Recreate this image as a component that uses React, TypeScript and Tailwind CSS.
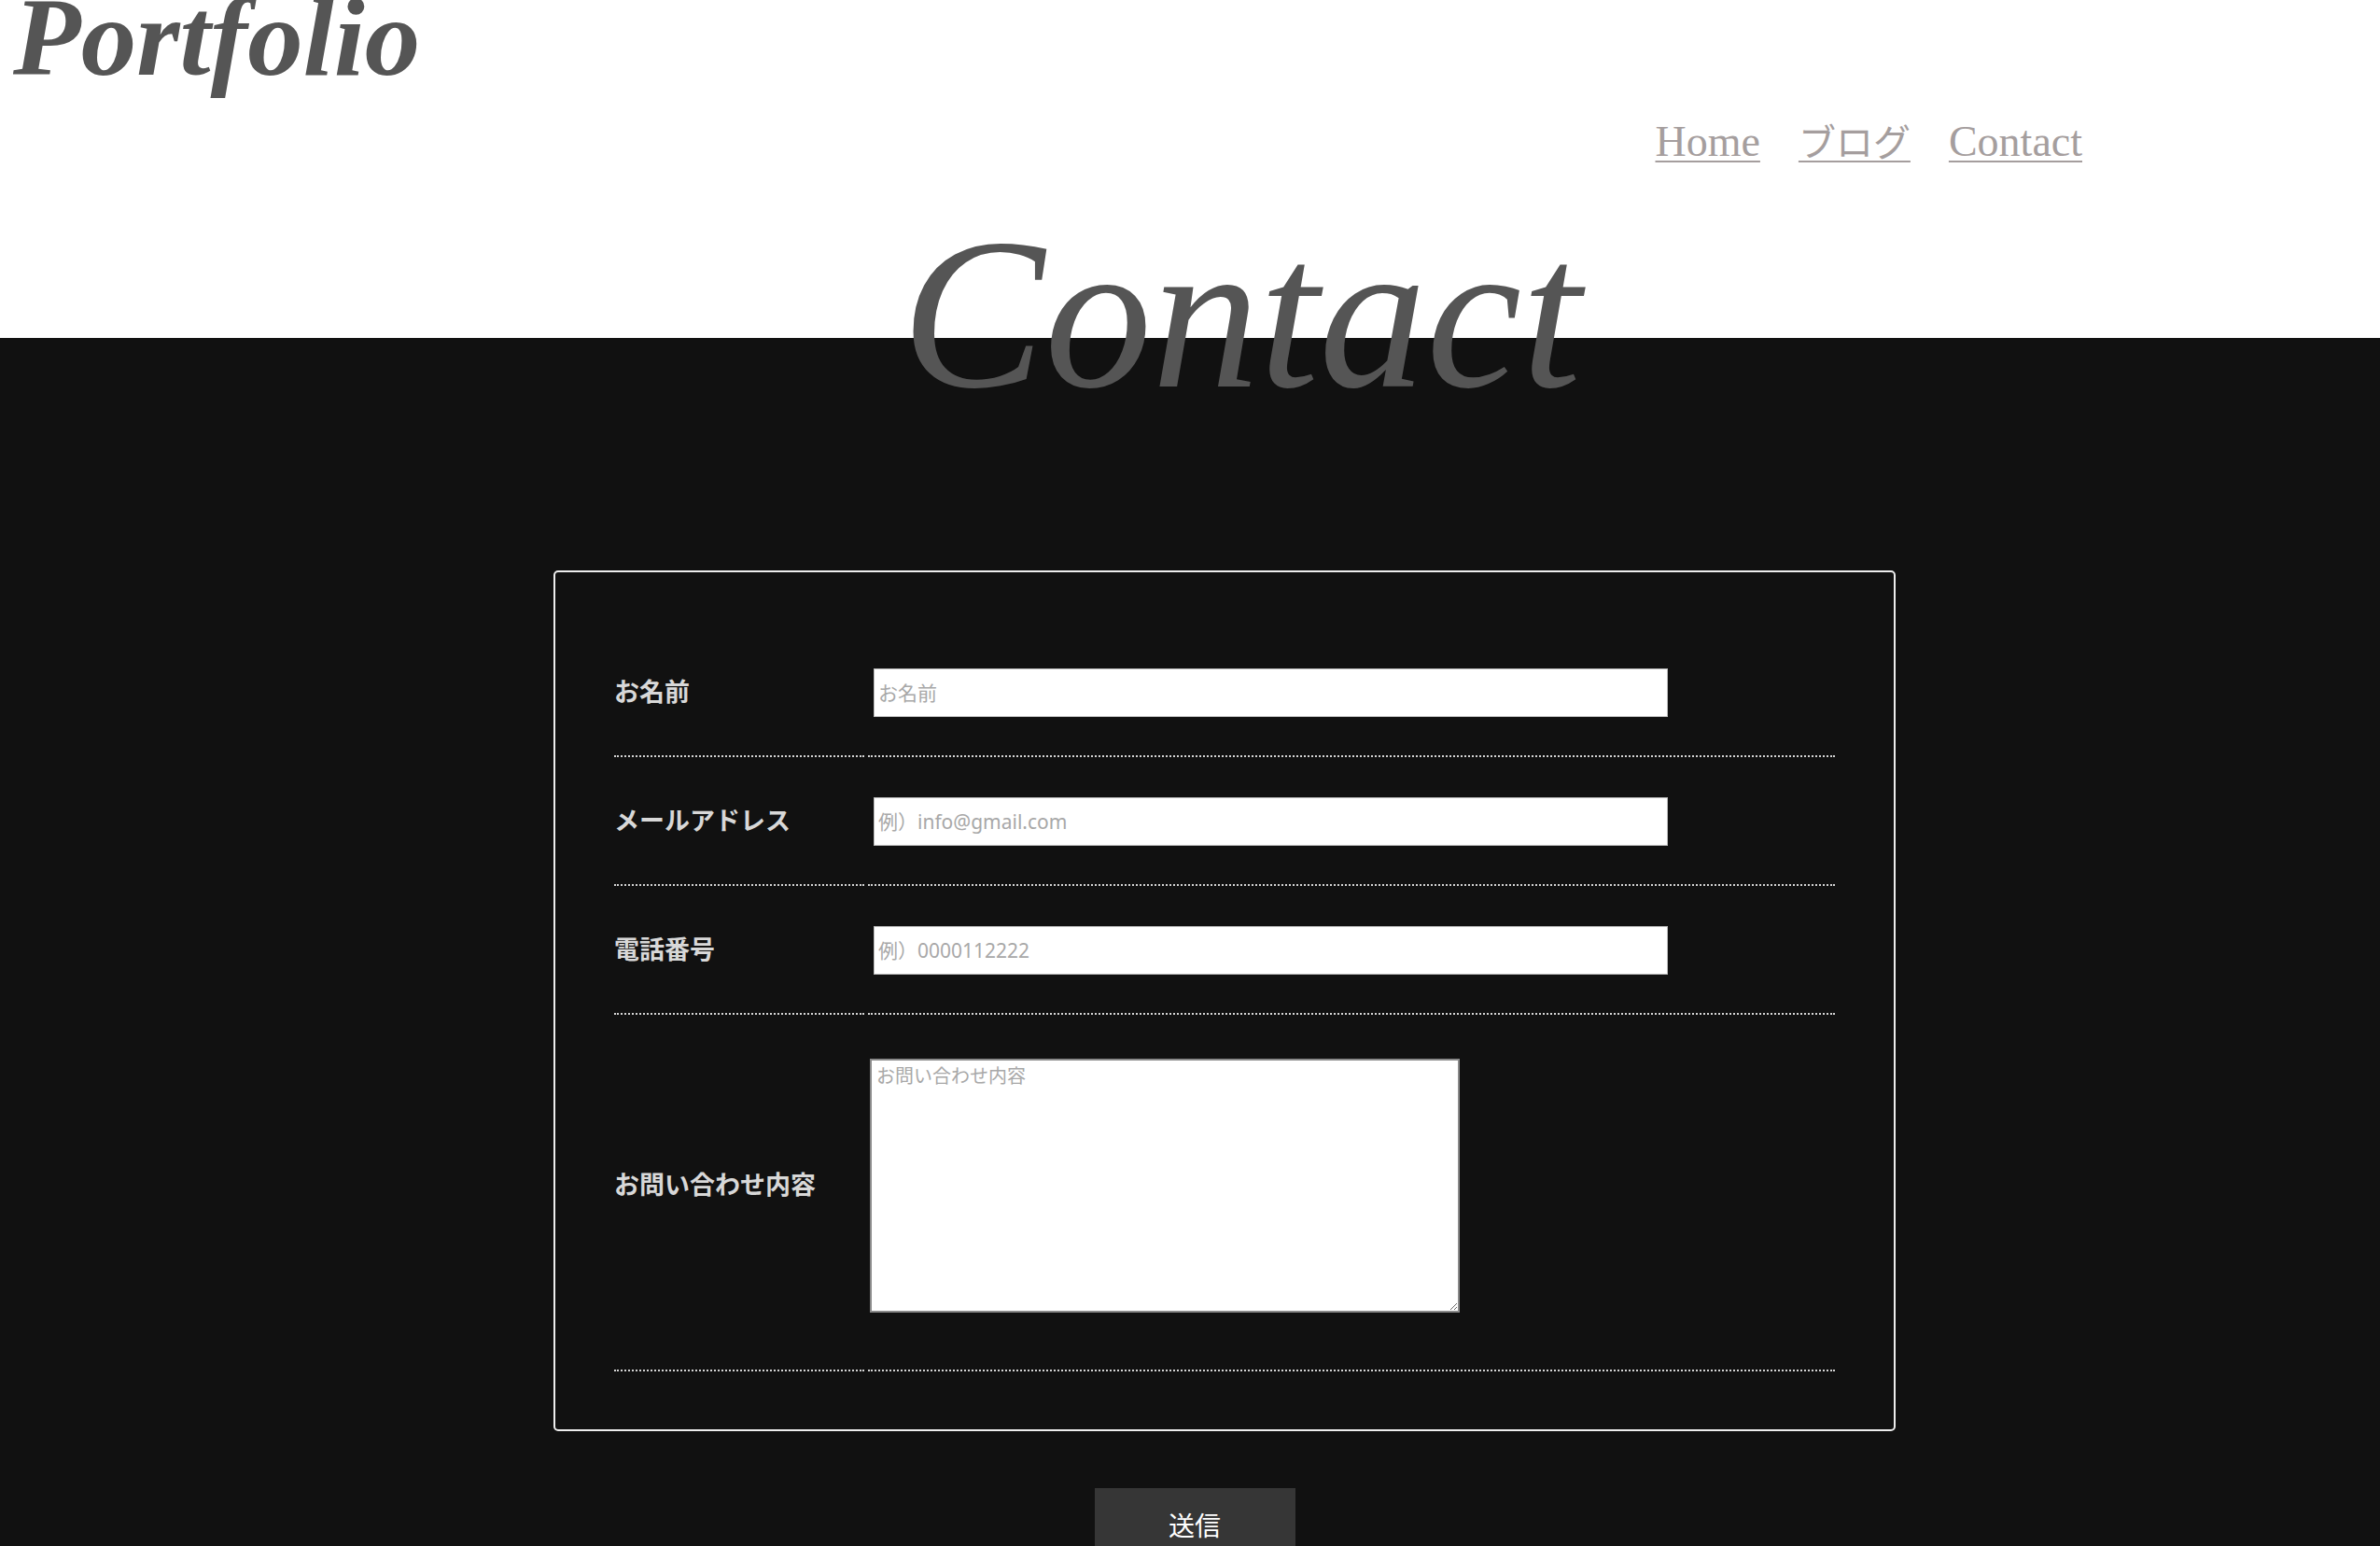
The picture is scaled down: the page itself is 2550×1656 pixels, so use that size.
import React from "react";

const serif = "font-['Liberation_Serif','Noto_Sans_CJK_JP',serif]";

function Row({
  label,
  children,
  top,
  bottom,
}: {
  label: string;
  children: React.ReactNode;
  top: string;
  bottom: string;
}) {
  return (
    <div className="flex gap-[4px]">
      <div
        className={`w-[268px] flex items-center border-b-2 border-dotted border-[#d4d4d4] text-[27px] font-bold text-[#d8d8d8] ${serif} ${top} ${bottom}`}
      >
        {label}
      </div>
      <div className={`flex-1 border-b-2 border-dotted border-[#d4d4d4] ${top} ${bottom}`}>
        {children}
      </div>
    </div>
  );
}

export default function App() {
  const inputCls =
    "block ml-[6px] w-[851px] h-[52px] bg-white border border-[#bdbdbd] px-[4px] text-[21px] text-[#333] outline-none font-['Noto_Sans','Noto_Sans_CJK_JP',sans-serif] placeholder:text-[#a8a8a8]";
  return (
    <div className="min-h-[1656px] flex flex-col bg-white">
      <header className="h-[362px] bg-white">
        <div
          className={`pl-[14px] text-[119px] leading-[80px] font-bold italic text-[#555555] ${serif}`}
        >
          Portfolio
        </div>
        <nav
          className={`mt-[49px] flex justify-end items-baseline gap-[41px] pr-[319px] text-[46px] leading-[46px] text-[#a59e9e] ${serif}`}
        >
          <a href="#" className="underline decoration-2 underline-offset-[5px]">
            Home
          </a>
          <a href="#" className="underline decoration-2 underline-offset-[5px] text-[40px]">
            ブログ
          </a>
          <a href="#" className="underline decoration-2 underline-offset-[5px]">
            Contact
          </a>
        </nav>
      </header>
      <main className="flex-1 bg-[#111111]">
        <h1
          className={`-mt-[140px] flex justify-center pl-[110px] text-[230px] leading-[230px] italic font-normal text-[#555555] ${serif}`}
        >
          Contact
        </h1>
        <div className="mt-[159px] flex justify-center pl-[74px]">
          <form className="w-[1438px] border-2 border-[#eeeeee] rounded-[5px] px-[63px] pt-[60px] pb-[62px]">
            <Row label="お名前" top="pt-[43px]" bottom="pb-[41px]">
              <input className={inputCls} placeholder="お名前" />
            </Row>
            <Row label="メールアドレス" top="pt-[43px]" bottom="pb-[41px]">
              <input className={inputCls} placeholder="例）info@gmail.com" />
            </Row>
            <Row label="電話番号" top="pt-[43px]" bottom="pb-[41px]">
              <input className={inputCls} placeholder="例）0000112222" />
            </Row>
            <Row label="お問い合わせ内容" top="pt-[47px]" bottom="pb-[61px]">
              <textarea
                className="block ml-[2px] w-[632px] h-[272px] bg-white border-2 border-[#8a8a8a] p-[5px] text-[20px] leading-[24px] text-[#333] outline-none font-['Noto_Sans','Noto_Sans_CJK_JP',sans-serif] placeholder:text-[#a8a8a8]"
                placeholder="お問い合わせ内容"
              />
            </Row>
          </form>
        </div>
        <div className="mt-[61px] flex justify-center pl-[10px]">
          <button
            type="button"
            className="w-[215px] h-[78px] bg-[#363636] text-white text-[28px] font-['Noto_Sans_CJK_JP',sans-serif]"
          >
            送信
          </button>
        </div>
      </main>
    </div>
  );
}
